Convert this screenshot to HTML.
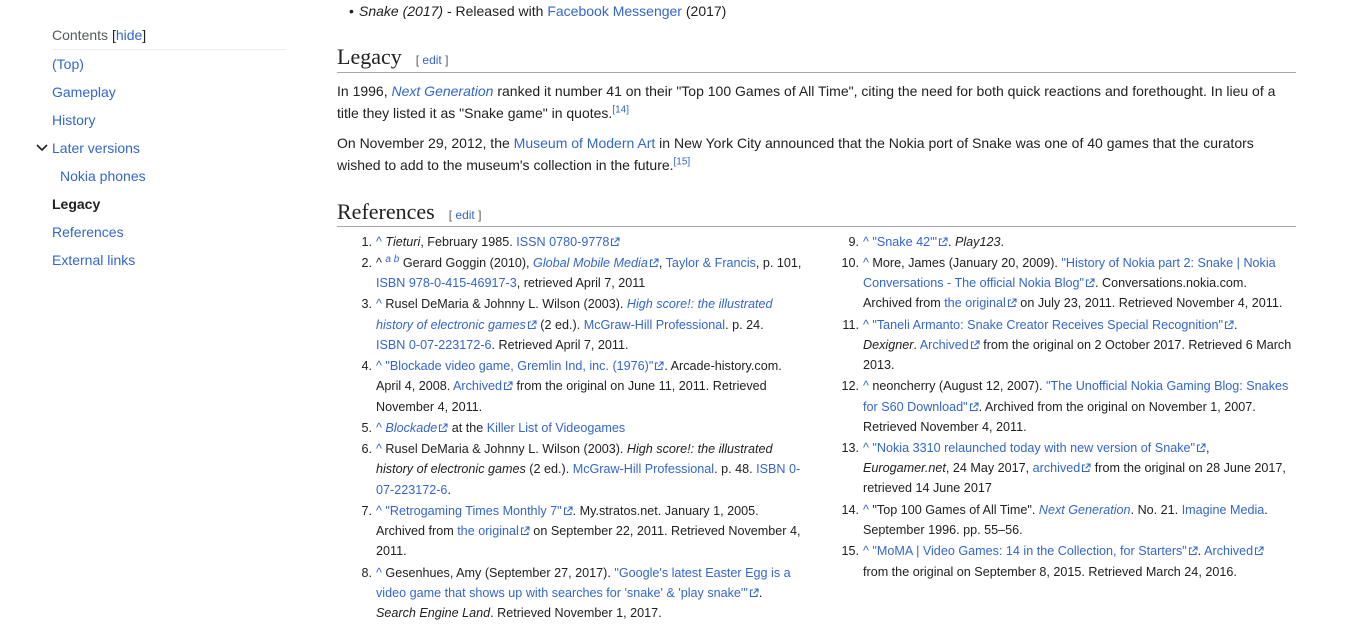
<!DOCTYPE html>
<html><head><meta charset="utf-8"><style>
body{margin:0;width:1348px;height:643px;background:#fff;font-family:"Liberation Sans",sans-serif;color:#202122;position:relative;overflow:hidden}
a{color:#3366cc;text-decoration:none}
.l{position:absolute;white-space:nowrap}
.t{font-size:14px;line-height:22px}
.r{font-size:12.6px;line-height:20px}
.n{position:absolute;width:20px;text-align:right;font-size:12.6px;line-height:20px}
.toc{position:absolute;left:52px;font-size:14px;line-height:20px}
sup{font-size:10px;line-height:0}
.h{font-family:"Liberation Serif",serif;font-size:22px;position:absolute;left:337px}
.e{font-family:"Liberation Sans",sans-serif;font-size:12px;margin-left:14px;color:#3366cc}
.e span{color:#54595d}
.x{display:inline-block;width:10px;height:10px;vertical-align:-1px;margin-left:1px}
</style></head><body>
<div class="toc" style="top:25px;color:#54595d">Contents <span style="color:#202122">[</span><a>hide</a><span style="color:#202122">]</span></div>
<div style="position:absolute;left:52px;top:49px;width:234px;height:1px;background:#eaecf0"></div>
<div class="toc" style="top:54px"><a>(Top)</a></div>
<div class="toc" style="top:82px"><a>Gameplay</a></div>
<div class="toc" style="top:110px"><a>History</a></div>
<svg style="position:absolute;left:36px;top:143px" width="12" height="9"><path d="M1 2 L6 7 L11 2" stroke="#202122" stroke-width="1.6" fill="none"/></svg>
<div class="toc" style="top:138px"><a>Later versions</a></div>
<div class="toc" style="top:166px;left:60px"><a>Nokia phones</a></div>
<div class="toc" style="top:194px;font-weight:bold">Legacy</div>
<div class="toc" style="top:222px"><a>References</a></div>
<div class="toc" style="top:250px"><a>External links</a></div>

<div class="l t" style="left:349px;top:0">•</div>
<div class="l t" style="left:359px;top:0"><i>Snake (2017)</i> - Released with <a>Facebook Messenger</a> (2017)</div>

<div class="h" style="top:44px">Legacy<span class="e"><span>[</span> edit <span>]</span></span></div>
<div style="position:absolute;left:337px;top:72px;width:959px;height:1px;background:#a2a9b1"></div>
<div class="l t" style="left:337px;top:80px">In 1996, <a><i>Next Generation</i></a> ranked it number 41 on their "Top 100 Games of All Time", citing the need for both quick reactions and forethought. In lieu of a</div>
<div class="l t" style="left:337px;top:102px">title they listed it as "Snake game" in quotes.<sup><a>[14]</a></sup></div>
<div class="l t" style="left:337px;top:132px">On November 29, 2012, the <a>Museum of Modern Art</a> in New York City announced that the Nokia port of Snake was one of 40 games that the curators</div>
<div class="l t" style="left:337px;top:154px">wished to add to the museum's collection in the future.<sup><a>[15]</a></sup></div>

<div class="h" style="top:199px">References<span class="e"><span>[</span> edit <span>]</span></span></div>
<div style="position:absolute;left:337px;top:226px;width:959px;height:1px;background:#a2a9b1"></div>

<svg width="0" height="0" style="position:absolute"><defs><symbol id="ex" viewBox="0 0 10 10"><path d="M4 2H1.5V8.5H8V6M5.5 1H9V4.5M9 1L4.5 5.5" stroke="#3366cc" stroke-width="1.1" fill="none"/></symbol></defs></svg>

<!-- col 1 -->
<div class="n" style="left:352px;top:232px">1.</div><div class="l r" style="left:376px;top:232px"><a>^</a> <i>Tieturi</i>, February 1985. <a>ISSN 0780-9778<svg class="x"><use href="#ex"/></svg></a></div>
<div class="n" style="left:352px;top:253px">2.</div><div class="l r" style="left:376px;top:253px">^ <sup><a><i>a b</i></a></sup> Gerard Goggin (2010), <a><i>Global Mobile Media</i><svg class="x"><use href="#ex"/></svg></a>, <a>Taylor &amp; Francis</a>, p. 101,</div>
<div class="l r" style="left:376px;top:273px"><a>ISBN 978-0-415-46917-3</a>, retrieved April 7, 2011</div>
<div class="n" style="left:352px;top:294px">3.</div><div class="l r" style="left:376px;top:294px"><a>^</a> Rusel DeMaria &amp; Johnny L. Wilson (2003). <a><i>High score!: the illustrated</i></a></div>
<div class="l r" style="left:376px;top:315px"><a><i>history of electronic games</i><svg class="x"><use href="#ex"/></svg></a> (2 ed.). <a>McGraw-Hill Professional</a>. p. 24.</div>
<div class="l r" style="left:376px;top:335px"><a>ISBN 0-07-223172-6</a>. Retrieved April 7, 2011.</div>
<div class="n" style="left:352px;top:356px">4.</div><div class="l r" style="left:376px;top:356px"><a>^ "Blockade video game, Gremlin Ind, inc. (1976)"<svg class="x"><use href="#ex"/></svg></a>. Arcade-history.com.</div>
<div class="l r" style="left:376px;top:376px">April 4, 2008. <a>Archived<svg class="x"><use href="#ex"/></svg></a> from the original on June 11, 2011. Retrieved</div>
<div class="l r" style="left:376px;top:397px">November 4, 2011.</div>
<div class="n" style="left:352px;top:418px">5.</div><div class="l r" style="left:376px;top:418px"><a>^</a> <a><i>Blockade</i><svg class="x"><use href="#ex"/></svg></a> at the <a>Killer List of Videogames</a></div>
<div class="n" style="left:352px;top:439px">6.</div><div class="l r" style="left:376px;top:439px"><a>^</a> Rusel DeMaria &amp; Johnny L. Wilson (2003). <i>High score!: the illustrated</i></div>
<div class="l r" style="left:376px;top:459px"><i>history of electronic games</i> (2 ed.). <a>McGraw-Hill Professional</a>. p. 48. <a>ISBN 0-</a></div>
<div class="l r" style="left:376px;top:480px"><a>07-223172-6</a>.</div>
<div class="n" style="left:352px;top:501px">7.</div><div class="l r" style="left:376px;top:501px"><a>^ "Retrogaming Times Monthly 7"<svg class="x"><use href="#ex"/></svg></a>. My.stratos.net. January 1, 2005.</div>
<div class="l r" style="left:376px;top:521px">Archived from <a>the original<svg class="x"><use href="#ex"/></svg></a> on September 22, 2011. Retrieved November 4,</div>
<div class="l r" style="left:376px;top:541px">2011.</div>
<div class="n" style="left:352px;top:563px">8.</div><div class="l r" style="left:376px;top:563px"><a>^</a> Gesenhues, Amy (September 27, 2017). <a>"Google's latest Easter Egg is a</a></div>
<div class="l r" style="left:376px;top:583px"><a>video game that shows up with searches for 'snake' &amp; 'play snake'"<svg class="x"><use href="#ex"/></svg></a>.</div>
<div class="l r" style="left:376px;top:603px"><i>Search Engine Land</i>. Retrieved November 1, 2017.</div>

<!-- col 2 -->
<div class="n" style="left:839px;top:232px">9.</div><div class="l r" style="left:863px;top:232px"><a>^ "Snake 42'"<svg class="x"><use href="#ex"/></svg></a>. <i>Play123</i>.</div>
<div class="n" style="left:839px;top:253px">10.</div><div class="l r" style="left:863px;top:253px"><a>^</a> More, James (January 20, 2009). <a>"History of Nokia part 2: Snake | Nokia</a></div>
<div class="l r" style="left:863px;top:273px"><a>Conversations - The official Nokia Blog"<svg class="x"><use href="#ex"/></svg></a>. Conversations.nokia.com.</div>
<div class="l r" style="left:863px;top:293px">Archived from <a>the original<svg class="x"><use href="#ex"/></svg></a> on July 23, 2011. Retrieved November 4, 2011.</div>
<div class="n" style="left:839px;top:315px">11.</div><div class="l r" style="left:863px;top:315px"><a>^ "Taneli Armanto: Snake Creator Receives Special Recognition"<svg class="x"><use href="#ex"/></svg></a>.</div>
<div class="l r" style="left:863px;top:335px"><i>Dexigner</i>. <a>Archived<svg class="x"><use href="#ex"/></svg></a> from the original on 2 October 2017. Retrieved 6 March</div>
<div class="l r" style="left:863px;top:355px">2013.</div>
<div class="n" style="left:839px;top:376px">12.</div><div class="l r" style="left:863px;top:376px"><a>^</a> neoncherry (August 12, 2007). <a>"The Unofficial Nokia Gaming Blog: Snakes</a></div>
<div class="l r" style="left:863px;top:397px"><a>for S60 Download"<svg class="x"><use href="#ex"/></svg></a>. Archived from the original on November 1, 2007.</div>
<div class="l r" style="left:863px;top:417px">Retrieved November 4, 2011.</div>
<div class="n" style="left:839px;top:438px">13.</div><div class="l r" style="left:863px;top:438px"><a>^ "Nokia 3310 relaunched today with new version of Snake"<svg class="x"><use href="#ex"/></svg></a>,</div>
<div class="l r" style="left:863px;top:458px"><i>Eurogamer.net</i>, 24 May 2017, <a>archived<svg class="x"><use href="#ex"/></svg></a> from the original on 28 June 2017,</div>
<div class="l r" style="left:863px;top:478px">retrieved 14 June 2017</div>
<div class="n" style="left:839px;top:500px">14.</div><div class="l r" style="left:863px;top:500px"><a>^</a> "Top 100 Games of All Time". <a><i>Next Generation</i></a>. No. 21. <a>Imagine Media</a>.</div>
<div class="l r" style="left:863px;top:520px">September 1996. pp. 55–56.</div>
<div class="n" style="left:839px;top:541px">15.</div><div class="l r" style="left:863px;top:541px"><a>^ "MoMA | Video Games: 14 in the Collection, for Starters"<svg class="x"><use href="#ex"/></svg></a>. <a>Archived<svg class="x"><use href="#ex"/></svg></a></div>
<div class="l r" style="left:863px;top:562px">from the original on September 8, 2015. Retrieved March 24, 2016.</div>
</body></html>
